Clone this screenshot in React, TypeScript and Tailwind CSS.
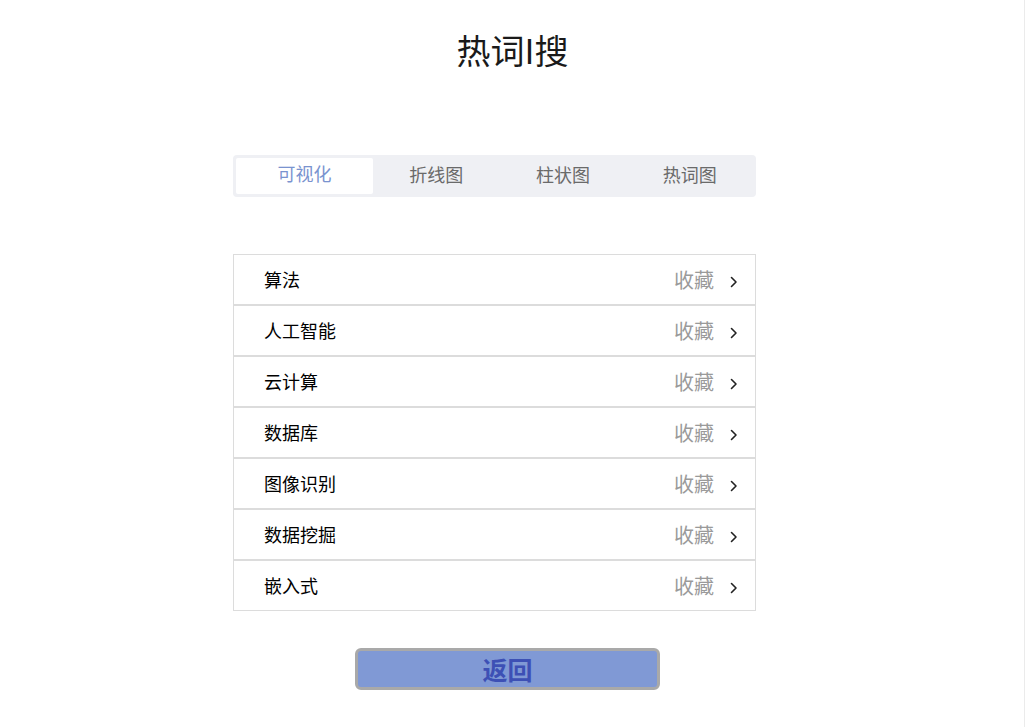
import React from "react";

const items = ["算法", "人工智能", "云计算", "数据库", "图像识别", "数据挖掘", "嵌入式"];
const tabs = ["可视化", "折线图", "柱状图", "热词图"];

function Chevron() {
  return (
    <svg width="8" height="12" viewBox="0 0 8 12" className="ml-[16px] mt-[4px]">
      <path d="M1.5 1.5 L6 6 L1.5 10.5" fill="none" stroke="#222" strokeWidth="1.6" strokeLinecap="round" strokeLinejoin="round" />
    </svg>
  );
}

export default function App() {
  return (
    <div
      className="w-[1025px] min-h-[727px] border-r border-[#ebebeb] bg-white"
      style={{ fontFamily: '"Noto Sans CJK SC", "Noto Sans", sans-serif' }}
    >
      <div className="pt-[25px] flex justify-center">
        <h1 className="text-[34px] leading-[50px] text-[#1a1a1a] font-normal pl-[1px]">热词I搜</h1>
      </div>

      <div className="mt-[80px] ml-[233px] w-[523px] h-[42px] rounded-[4px] bg-[#eff0f4] p-[3px] flex">
        {tabs.map((t, i) => (
          <div
            key={t}
            className={
              i === 0
                ? "w-[137px] h-[36px] bg-white rounded-[2px] flex items-center justify-center text-[18px] text-[#7a93cf] pb-[6px]"
                : "flex-1 h-[36px] flex items-center justify-center text-[18px] text-[#6a6a6a] pb-[4px]"
            }
          >
            {t}
          </div>
        ))}
      </div>

      <div className="mt-[57px] ml-[233px] w-[523px]">
        {items.map((name) => (
          <div
            key={name}
            className="h-[51px] border border-[#dcdcdc] flex items-center pl-[30px] pr-[17px]"
          >
            <span className="text-[18px] text-[#000] flex-1">{name}</span>
            <span className="text-[20px] text-[#9a9a9a]">收藏</span>
            <Chevron />
          </div>
        ))}
      </div>

      <div className="mt-[37px] ml-[355px] w-[305px] h-[42px] rounded-[6px] border-[3px] border-[#a9a9a9] bg-[#8099d5] flex items-center justify-center">
        <span className="text-[25px] font-bold text-[#3d50b5] leading-none">返回</span>
      </div>
    </div>
  );
}
